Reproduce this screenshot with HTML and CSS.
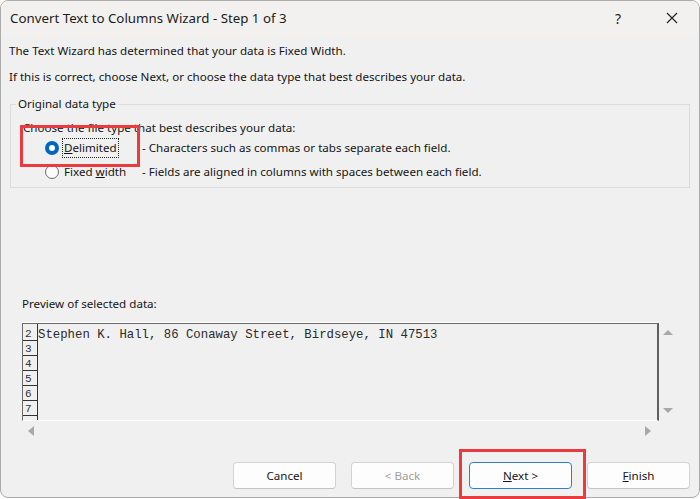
FILE: index.html
```html
<!DOCTYPE html>
<html>
<head>
<meta charset="utf-8">
<link rel="stylesheet" href="styles.css">
</head>
<body>
<div class="page">
  <div class="window">
    <div class="titlebar">
      <span class="title">Convert Text to Columns Wizard - Step 1 of 3</span>
      <span class="help">?</span>
      <span class="close"><svg width="12" height="12" viewBox="0 0 12 12"><path d="M1 1 L11 11 M11 1 L1 11" stroke="#1f1f1f" stroke-width="1.1" fill="none"/></svg></span>
    </div>
    <div class="content">
      <p class="intro">The Text Wizard has determined that your data is Fixed Width.</p>
      <p class="intro second">If this is correct, choose Next, or choose the data type that best describes your data.</p>
      <fieldset class="group">
        <legend>Original data type</legend>
        <div class="choose">Choose the file type that best describes your data:</div>
        <div class="option-row">
          <span class="radio checked"></span>
          <span class="opt-label"><span class="focus"><u>D</u>elimited</span></span>
          <span class="opt-desc">- Characters such as commas or tabs separate each field.</span>
        </div>
        <div class="option-row">
          <span class="radio"></span>
          <span class="opt-label"><span class="nofocus">Fixed <u>w</u>idth</span></span>
          <span class="opt-desc">- Fields are aligned in columns with spaces between each field.</span>
        </div>
      </fieldset>
      <div class="preview-label">Preview of selected data:</div>
      <div class="preview">
        <div class="preview-main">
          <div class="preview-box">
            <div class="rownums">
              <div class="num">2</div>
              <div class="num">3</div>
              <div class="num">4</div>
              <div class="num">5</div>
              <div class="num">6</div>
              <div class="num">7</div>
              <div class="num"></div>
            </div>
            <div class="preview-text">Stephen K. Hall, 86 Conaway Street, Birdseye, IN 47513</div>
          </div>
          <div class="vscroll">
            <span class="arrow-up"></span>
            <span class="arrow-down"></span>
          </div>
        </div>
        <div class="hscroll">
          <span class="arrow-left"></span>
          <span class="arrow-right"></span>
        </div>
      </div>
      <div class="buttons">
        <button class="btn">Cancel</button>
        <button class="btn disabled">&lt; Back</button>
        <button class="btn primary"><u>N</u>ext &gt;</button>
        <button class="btn"><u>F</u>inish</button>
      </div>
    </div>
  </div>
  <div class="annot annot-delim"></div>
  <div class="annot annot-next"></div>
</div>
</body>
</html>
```

FILE: styles.css
```css
* { box-sizing: border-box; }
html, body { margin: 0; padding: 0; background: #ffffff; }
body {
  font-family: "Noto Sans", "Open Sans", sans-serif;
  font-size: 11.6px;
  color: #151515;
}
.page {
  position: relative;
  width: 700px;
  height: 499px;
  overflow: hidden;
}
.window {
  width: 700px;
  height: 498px;
  border: 1px solid #ababab;
  border-radius: 8px;
  background: #f0f0f0;
  overflow: hidden;
  display: flex;
  flex-direction: column;
}
.titlebar {
  height: 34px;
  flex: none;
  background: #f3f1ef;
  display: flex;
  align-items: center;
  padding-left: 9px;
}
.title {
  flex: 1;
  font-size: 13.3px;
  color: #1b1b1b;
}
.help {
  width: 40px;
  text-align: center;
  font-size: 14px;
  color: #1b1b1b;
}
.close {
  width: 54px;
  margin-left: 7px;
  display: flex;
  justify-content: center;
  align-items: center;
}
.content {
  flex: 1;
  padding: 8px 0 0 8px;
  display: flex;
  flex-direction: column;
}
.intro {
  margin: 0;
  line-height: 16px;
}
.intro.second { margin-top: 10px; }
.group {
  margin: 11px 9px 0 1px;
  border: 1px solid #dcdcdc;
  padding: 8px 0 3px 12px;
  min-width: 0;
}
.group legend {
  margin-left: -7px;
  padding: 0 2px;
  line-height: 16px;
}
.choose { line-height: 16px; }
.option-row {
  height: 24px;
  display: flex;
  align-items: center;
  padding-left: 22px;
}
.radio {
  width: 14px;
  height: 14px;
  border-radius: 50%;
  border: 1px solid #6b6b6b;
  background: #fbfbfb;
  flex: none;
}
.radio.checked {
  border: none;
  background: radial-gradient(circle, #ffffff 0 2.7px, #0067c0 3.3px);
}
.opt-label {
  width: 80px;
  margin-left: 3px;
  flex: none;
}
.focus {
  display: inline-block;
  border: 1px dotted #222;
  padding: 1px 1px;
  line-height: 16px;
}
.nofocus {
  display: inline-block;
  padding: 2px 2px;
  line-height: 16px;
}
.opt-desc { line-height: 16px; }
.preview-label {
  margin: 108px 0 0 13px;
  line-height: 16px;
}
.preview {
  margin: 11px 0 0 13px;
  width: 660px;
}
.preview-main {
  display: flex;
}
.preview-box {
  width: 637px;
  height: 98px;
  border-top: 1px solid #6a6a6a;
  border-left: 1px solid #6a6a6a;
  border-right: 2px solid #5f5f5f;
  border-bottom: 1px solid #ffffff;
  box-shadow: 0 -1px 0 #ffffff;
  display: flex;
  overflow: hidden;
}
.rownums {
  width: 15px;
  flex: none;
  border-right: 1px solid #333;
  padding-top: 2px;
}
.num {
  height: 15px;
  border-bottom: 1px solid #333;
  font-family: "Liberation Mono", monospace;
  font-size: 11px;
  line-height: 16px;
  color: #333;
  padding-left: 2px;
}
.preview-text {
  font-family: "Liberation Mono", "Courier New", monospace;
  font-size: 12.33px;
  line-height: 15px;
  padding-top: 4px;
  color: #2b2b2b;
  white-space: pre;
}
.vscroll {
  width: 17px;
  height: 98px;
  display: flex;
  flex-direction: column;
  justify-content: space-between;
  align-items: center;
  padding: 7px 0 8px 0;
}
.arrow-up, .arrow-down, .arrow-left, .arrow-right {
  width: 0; height: 0;
  display: block;
}
.arrow-up {
  border-left: 5px solid transparent;
  border-right: 5px solid transparent;
  border-bottom: 5px solid #a8a8a8;
}
.arrow-down {
  border-left: 5px solid transparent;
  border-right: 5px solid transparent;
  border-top: 5px solid #a8a8a8;
}
.hscroll {
  width: 637px;
  height: 19px;
  display: flex;
  justify-content: space-between;
  align-items: center;
  padding: 1px 8px 0 6px;
}
.arrow-left {
  border-top: 5px solid transparent;
  border-bottom: 5px solid transparent;
  border-right: 6px solid #a8a8a8;
}
.arrow-right {
  border-top: 5px solid transparent;
  border-bottom: 5px solid transparent;
  border-left: 6px solid #a8a8a8;
}
.buttons {
  margin: 22px 9px 0 0;
  display: flex;
  justify-content: flex-end;
  gap: 15px;
}
.btn {
  width: 103px;
  height: 27px;
  background: #fdfdfd;
  border: 1px solid #d3d3d3;
  border-bottom-color: #c4c4c4;
  border-radius: 4px;
  font-family: "Noto Sans", "Open Sans", sans-serif;
  font-size: 11.6px;
  color: #151515;
  padding: 0;
}
.btn.disabled { color: #9d9d9d; }
.btn.primary {
  border: 1px solid #2f7fcc;
  box-shadow: inset 0 0 0 1px #ffffff;
}
.annot {
  position: absolute;
  border: 3px solid #ec3b3e;
}
.annot-delim {
  left: 20px;
  top: 125px;
  width: 120px;
  height: 42px;
}
.annot-next {
  left: 459px;
  top: 449px;
  width: 127px;
  height: 50px;
}
```
